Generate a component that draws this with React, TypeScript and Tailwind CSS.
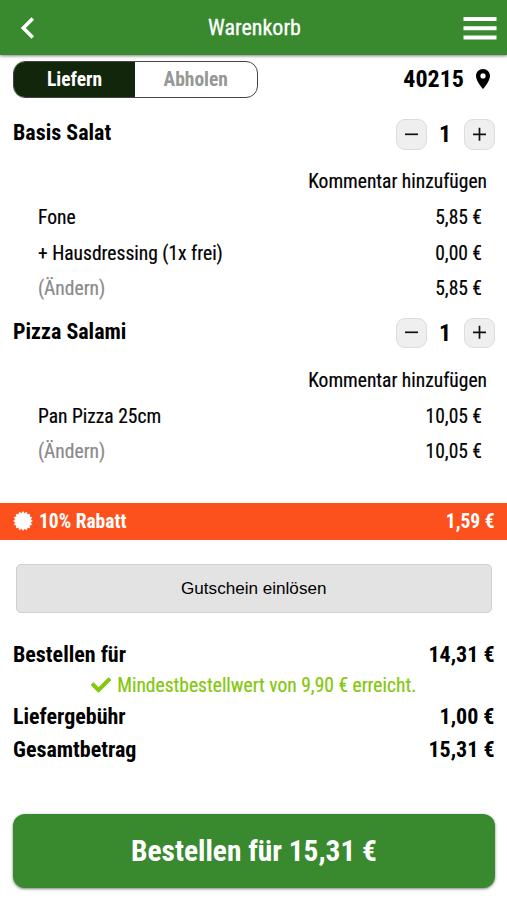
import { FaCheck } from "react-icons/fa";

type Line = { label: string; price: string; muted?: boolean };

const burst = Array.from({ length: 32 }, (_, i) => {
  const r = i % 2 === 0 ? 9.4 : 7.6;
  const a = (i * Math.PI) / 16;
  return `${(10 + r * Math.sin(a)).toFixed(2)},${(10 - r * Math.cos(a)).toFixed(2)}`;
}).join(" ");

function StepButton({ plus }: { plus?: boolean }) {
  return (
    <button className="flex h-[30.5px] w-[31px] items-center justify-center rounded-[9px] border border-[#dcdcdc] bg-[#efefef]">
      <svg width="15" height="15" viewBox="0 0 15 15" fill="none" stroke="#111" strokeWidth="1.7">
        <path d={plus ? "M1 7.3H14M7.5 0.8V13.8" : "M1 7.3H14"} />
      </svg>
    </button>
  );
}

function CartItem({ name, lines }: { name: string; lines: Line[] }) {
  return (
    <section>
      <div className="flex h-[38px] items-start justify-between pr-3 pl-[13px]">
        <h2 className="text-[22px] leading-[35px] font-bold">{name}</h2>
        <div className="flex items-center pt-[4px]">
          <StepButton />
          <span className="w-[37px] pr-[1px] text-center text-[24px] leading-[30px] font-bold">1</span>
          <StepButton plus />
        </div>
      </div>
      <div className="mt-[10px] h-[36px] pr-5 text-right text-[19.5px] leading-[37px] [-webkit-text-stroke:0.2px_currentColor]">Kommentar hinzufügen</div>
      <div className="pt-px pr-[25px] pl-[38px] text-[19.5px] leading-[35.5px] [-webkit-text-stroke:0.2px_currentColor]">
        {lines.map((l, i) => (
          <div key={i} className="flex justify-between">
            <span className={l.muted ? "text-[#8a8a8a]" : ""}>{l.label}</span>
            <span>{l.price}</span>
          </div>
        ))}
      </div>
    </section>
  );
}

function Total({ label, value }: { label: string; value: string }) {
  return (
    <div className="flex justify-between text-[22px] leading-[33px] font-bold">
      <span>{label}</span>
      <span>{value}</span>
    </div>
  );
}

export default function App() {
  return (
    <div className="h-[900px] overflow-hidden bg-white font-['Roboto_Condensed',Roboto,sans-serif] text-black">
      <header className="flex h-[55px] items-center justify-between bg-[#39892f] pr-[10px] pl-[20px] text-white shadow-[0_1px_3px_rgba(0,0,0,0.5)]">
        <svg width="26" height="24" viewBox="0 0 26 24" fill="none" stroke="currentColor" strokeWidth="3.6">
          <path d="M12.8 2.5L3.3 12L12.8 21.5" />
        </svg>
        <h1 className="text-[22px] leading-[56px] [-webkit-text-stroke:0.3px_white]">Warenkorb</h1>
        <svg width="34" height="24" viewBox="0 0 34 24" fill="currentColor">
          <path d="M0.5 1h33v4h-33zM0.5 10.2h33v4h-33zM0.5 19.5h33v4h-33z" />
        </svg>
      </header>

      <div className="flex h-[60px] items-start justify-between pt-[6px] pr-[16px] pl-[13px]">
        <div className="flex h-[37px] w-[244.5px] overflow-hidden rounded-[12px] border border-[#444] text-center text-[19.5px] leading-[35px] font-bold">
          <span className="w-[121px] bg-[#12260c] text-white">Liefern</span>
          <span className="flex-1 text-[#959895]">Abholen</span>
        </div>
        <div className="flex items-center gap-[11px]">
          <span className="text-[24px] leading-[37px] font-bold">40215</span>
          <svg width="16" height="22" viewBox="0 0 16 22" className="-mt-[2px]">
            <path fillRule="evenodd" d="M8 1C4 1 1 4 1 7.9C1 13 8 21 8 21S15 13 15 7.9C15 4 12 1 8 1ZM8 5.3a2.6 2.6 0 1 1 0 5.2a2.6 2.6 0 0 1 0-5.2Z" />
          </svg>
        </div>
      </div>

      <CartItem
        name="Basis Salat"
        lines={[
          { label: "Fone", price: "5,85 €" },
          { label: "+ Hausdressing (1x frei)", price: "0,00 €" },
          { label: "(Ändern)", price: "5,85 €", muted: true },
        ]}
      />
      <div className="mt-[7px]">
        <CartItem
          name="Pizza Salami"
          lines={[
            { label: "Pan Pizza 25cm", price: "10,05 €" },
            { label: "(Ändern)", price: "10,05 €", muted: true },
          ]}
        />
      </div>

      <div className="mt-[33px] flex h-[37px] items-center bg-[#fc511d] px-[12.5px] text-[19.5px] font-bold text-white">
        <svg width="20" height="20" viewBox="0 0 20 20" fill="currentColor" stroke="currentColor" strokeWidth="0.8" strokeLinejoin="round">
          <polygon points={burst} />
        </svg>
        <span className="ml-[6.5px] flex-1 pt-[2px]">10% Rabatt</span>
        <span className="pt-[2px]">1,59 €</span>
      </div>

      <button className="ml-[15.5px] mt-[24px] block h-[49px] w-[476.5px] rounded-[5px] border-[1.5px] border-[#cfcfcf] bg-[#e3e3e3] pt-[2px] font-['Liberation_Sans',Arial,sans-serif] text-[17.1px]">
        Gutschein einlösen
      </button>

      <div className="mt-[25px] pr-[12.5px] pl-[13px]">
        <Total label="Bestellen für" value="14,31 €" />
        <div className="flex h-[29px] items-center justify-center gap-[6px] text-[19.5px] text-[#84c70c] [-webkit-text-stroke:0.2px_currentColor]">
          <FaCheck size={20} />
          <span className="pt-px">Mindestbestellwert von 9,90 € erreicht.</span>
        </div>
        <Total label="Liefergebühr" value="1,00 €" />
        <Total label="Gesamtbetrag" value="15,31 €" />
      </div>

      <button className="mx-[13px] mt-[48.5px] block h-[73.5px] w-[482px] rounded-[12px] bg-[#39892f] text-[29.4px] font-bold text-white shadow-[0_1px_3px_rgba(0,0,0,0.5)]">
        Bestellen für 15,31 €
      </button>
    </div>
  );
}
